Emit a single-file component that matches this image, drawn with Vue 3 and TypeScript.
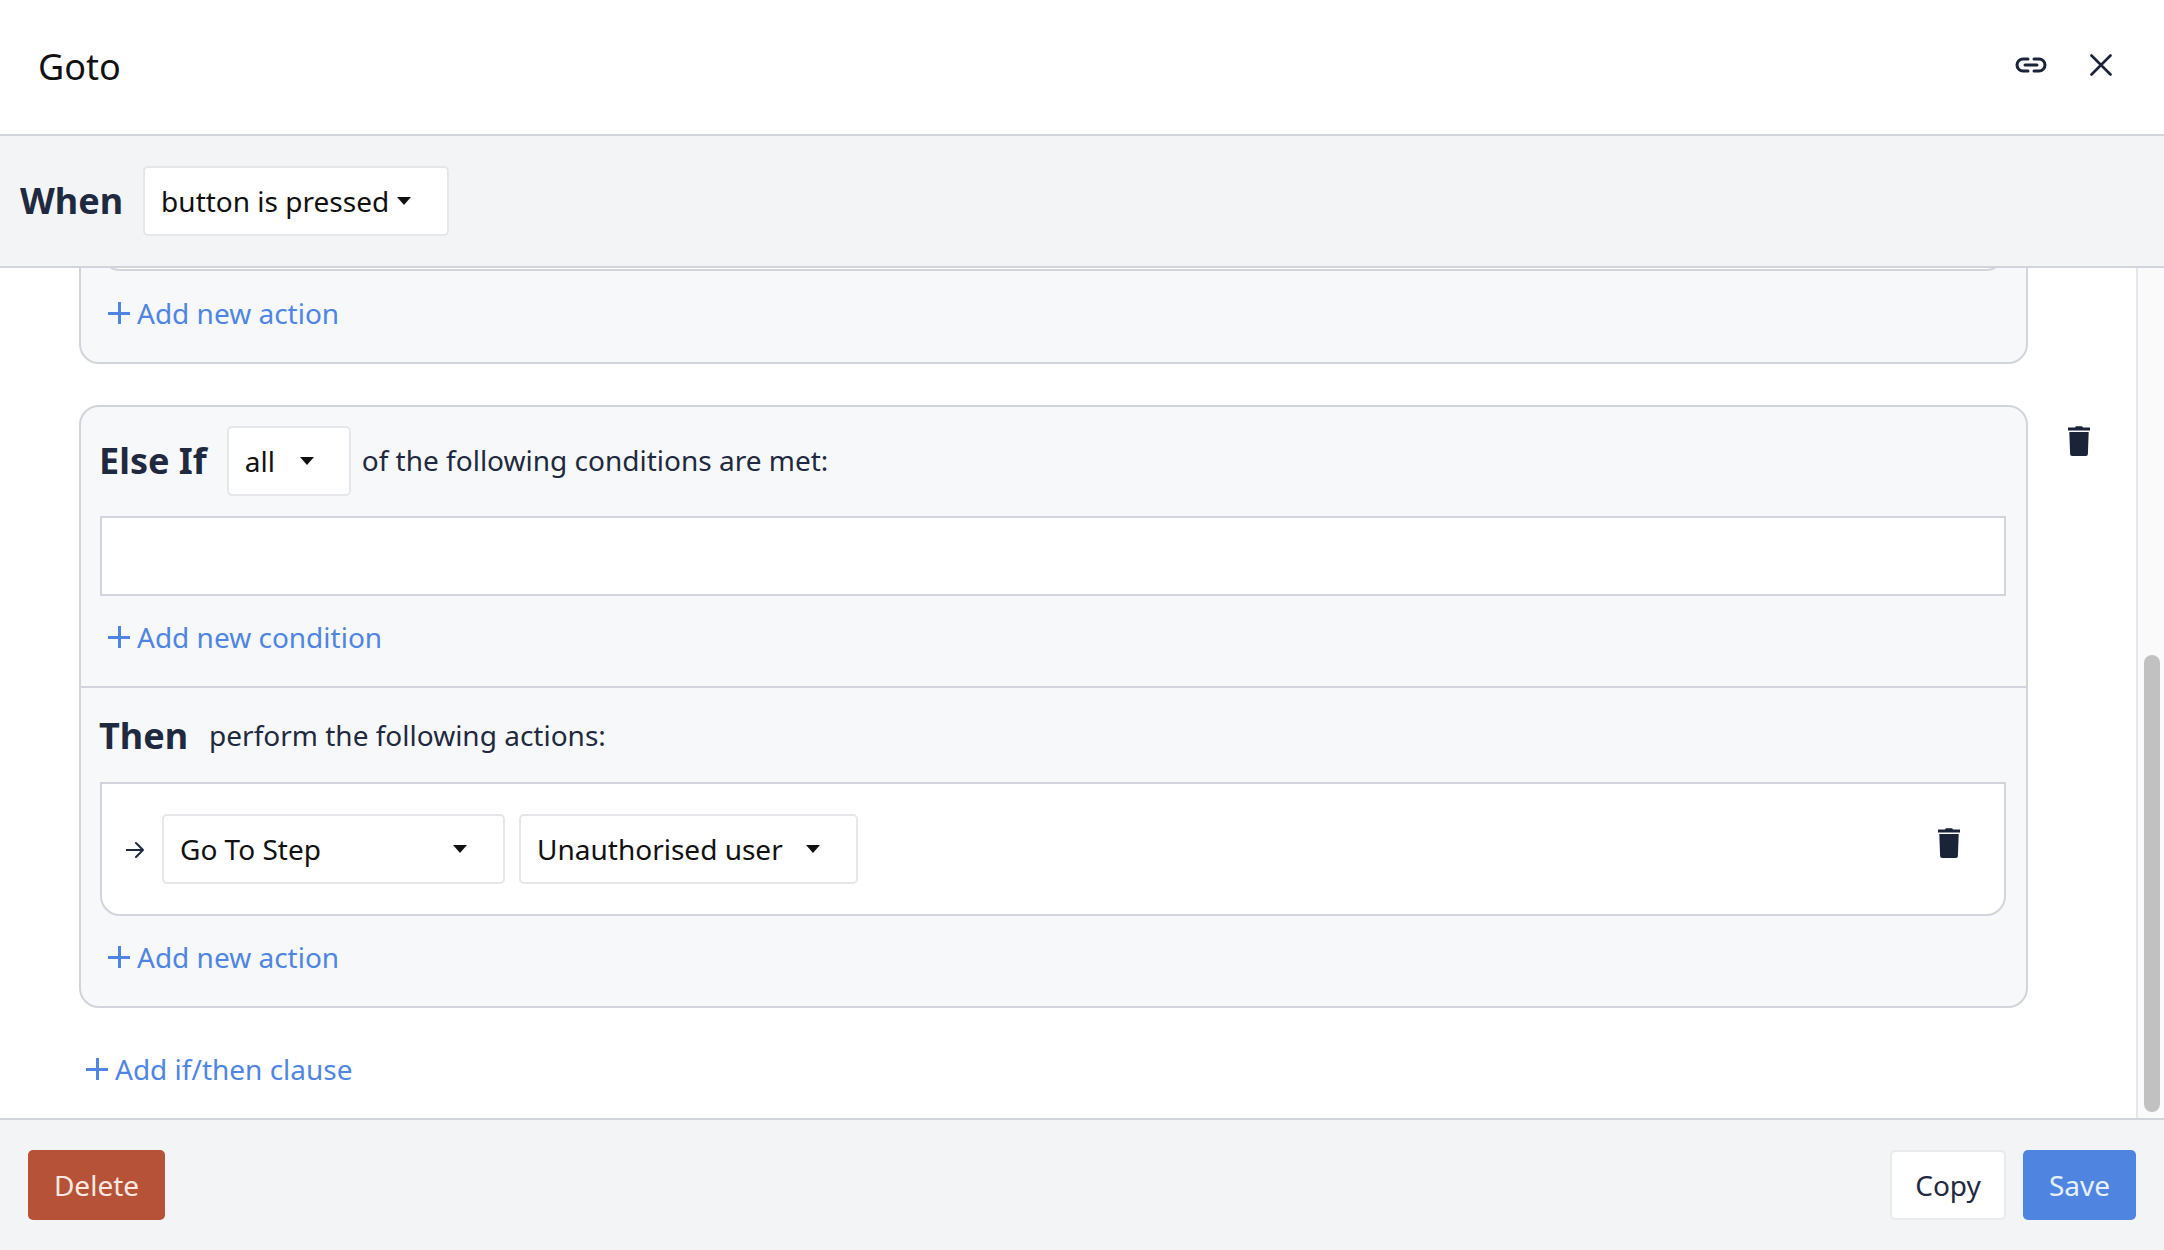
<template>
  <div class="modal">
    <header class="modal-header">
      <h1 class="title">Goto</h1>
      <div class="header-icons">
        <svg class="link-icon" viewBox="0 0 32 16" fill="none" stroke="currentColor" stroke-width="3" stroke-linecap="round">
          <path d="M13 2H8a6 6 0 0 0 0 12h5" />
          <path d="M19 2h5a6 6 0 0 1 0 12h-5" />
          <path d="M10 8h12" />
        </svg>
        <svg class="close-icon" viewBox="0 0 22 22" fill="none" stroke="currentColor" stroke-width="2.6" stroke-linecap="round">
          <path d="M1.500 1.500l19 19M20.500 1.500l-19 19" />
        </svg>
      </div>
    </header>

    <div class="toolbar">
      <span class="heading">When</span>
      <div class="dropdown when-dropdown">
        <span>button is pressed</span>
        <i class="caret"></i>
      </div>
    </div>

    <div class="body">
      <div class="scroller">
        <div class="clause-row first">
          <section class="card">
            <div class="part">
              <div class="action-box stub"></div>
              <a class="add-link"><span class="plus"></span>Add new action</a>
            </div>
          </section>
        </div>

        <div class="clause-row">
          <section class="card">
            <div class="part cond-part">
              <div class="row">
                <span class="heading">Else If</span>
                <div class="dropdown all-dropdown">
                  <span>all</span>
                  <i class="caret"></i>
                </div>
                <span class="note">of the following conditions are met:</span>
              </div>
              <div class="condition-box"></div>
              <a class="add-link"><span class="plus"></span>Add new condition</a>
            </div>
            <div class="part then-part">
              <div class="row then-row">
                <span class="heading">Then</span>
                <span class="note">perform the following actions:</span>
              </div>
              <div class="action-box">
                <svg class="arrow" viewBox="0 0 20 20" fill="none" stroke="currentColor" stroke-width="2" stroke-linecap="round" stroke-linejoin="round">
                  <path d="M0 10h17M10 3l7 7-7 7" />
                </svg>
                <div class="dropdown step-dropdown">
                  <span>Go To Step</span>
                  <i class="caret"></i>
                </div>
                <div class="dropdown target-dropdown">
                  <span>Unauthorised user</span>
                  <i class="caret"></i>
                </div>
                <svg class="trash action-trash" viewBox="0 0 22 30" fill="currentColor">
                  <path d="M7 1.500 8 .3h6l1 1.200h7v3H0v-3zM1.300 6h19.400l-.8 22a2 2 0 0 1-2 2H4.100a2 2 0 0 1-2-2z" />
                </svg>
              </div>
              <a class="add-link"><span class="plus"></span>Add new action</a>
            </div>
          </section>
          <svg class="trash card-trash" viewBox="0 0 22 30" fill="currentColor">
            <path d="M7 1.500 8 .3h6l1 1.200h7v3H0v-3zM1.300 6h19.400l-.8 22a2 2 0 0 1-2 2H4.100a2 2 0 0 1-2-2z" />
          </svg>
        </div>

        <a class="add-link add-clause"><span class="plus"></span>Add if/then clause</a>
      </div>
      <div class="scroll-track">
        <div class="scroll-thumb"></div>
      </div>
    </div>

    <footer class="modal-footer">
      <button class="btn btn-delete">Delete</button>
      <div class="footer-right">
        <button class="btn btn-copy">Copy</button>
        <button class="btn btn-save">Save</button>
      </div>
    </footer>
  </div>
</template>

<script setup lang="ts">
</script>

<style>
html,
body {
  margin: 0;
  background: #fff;
}
</style>

<style scoped>
.modal {
  width: 2164px;
  height: 1250px;
  display: flex;
  flex-direction: column;
  overflow: hidden;
  background: #fff;
  font-family: "Noto Sans", sans-serif;
  font-size: 28px;
  color: #1f2a40;
}

.modal-header {
  height: 134px;
  flex: none;
  display: flex;
  align-items: center;
  justify-content: space-between;
  padding: 0 52px 0 38px;
  border-bottom: 2px solid #d1d5db;
}

.title {
  margin: 0 0 2px;
  font-size: 36px;
  font-weight: 400;
  color: #111;
}

.header-icons {
  display: flex;
  align-items: center;
  gap: 43px;
  margin-bottom: 5px;
  color: #1a2338;
}

.link-icon {
  width: 32px;
  height: 16px;
}

.close-icon {
  width: 22px;
  height: 22px;
}

.toolbar {
  height: 130px;
  flex: none;
  display: flex;
  align-items: center;
  gap: 20px;
  padding-left: 20px;
  background: #f3f4f6;
  border-bottom: 2px solid #d1d5db;
}

.heading {
  font-size: 36px;
  font-weight: 700;
  line-height: 44px;
  color: #1f2a40;
}

.card .heading {
  margin-left: -1px;
}

.dropdown {
  height: 70px;
  box-sizing: border-box;
  flex: none;
  display: flex;
  align-items: center;
  padding: 0 36px 0 16px;
  background: #fff;
  border: 2px solid #e5e7eb;
  border-radius: 5px;
  color: #111;
  white-space: nowrap;
}

.caret {
  width: 0;
  height: 0;
  margin-left: auto;
  border-left: 7px solid transparent;
  border-right: 7px solid transparent;
  border-top: 8px solid #111;
}

.when-dropdown {
  width: 306px;
}

.all-dropdown {
  width: 124px;
  padding-right: 35px;
  margin-right: -9px;
}

.step-dropdown {
  width: 343px;
}

.target-dropdown {
  width: 339px;
  margin-left: 14px;
}

.body {
  flex: 1;
  min-height: 0;
  display: flex;
}

.scroller {
  flex: 1;
  min-width: 0;
  overflow: hidden;
  padding-left: 79px;
}

.clause-row {
  display: flex;
  align-items: flex-start;
  gap: 40px;
  margin-bottom: 40px;
}

.clause-row.first {
  margin-top: -27px;
  margin-bottom: 41px;
}

.card {
  width: 1949px;
  box-sizing: border-box;
  flex: none;
  background: #f7f8fa;
  border: 2px solid #d1d5db;
  border-radius: 20px;
}

.part {
  padding: 0 20px 27px 19px;
}

.cond-part {
  padding-top: 19px;
  border-bottom: 2px solid #d1d5db;
}

.then-part {
  padding-top: 26px;
}

.row {
  display: flex;
  align-items: center;
  gap: 20px;
}

.then-row {
  height: 44px;
  gap: 21px;
  margin-bottom: 24px;
}

.note {
  line-height: 44px;
  margin-bottom: 2px;
}

.condition-box {
  height: 80px;
  box-sizing: border-box;
  margin-top: 20px;
  background: #fff;
  border: 2px solid #d1d5db;
}

.action-box {
  height: 134px;
  box-sizing: border-box;
  display: flex;
  align-items: center;
  padding: 0 44px 0 24px;
  background: #fff;
  border: 2px solid #d1d5db;
  border-radius: 0 0 20px 20px;
}

.action-box.stub {
  height: 28px;
  margin-bottom: 20px;
  border-top: none;
}

.arrow {
  width: 20px;
  height: 20px;
  flex: none;
  margin: 2px 16px 0 0;
}

.trash {
  width: 22px;
  height: 30px;
  flex: none;
  color: #1a2338;
}

.action-trash {
  margin-left: auto;
  margin-bottom: 12px;
}

.card-trash {
  margin-top: 21px;
}

.add-link {
  display: flex;
  align-items: center;
  height: 44px;
  margin-top: 19px;
  margin-left: 8px;
  color: #4f85e3;
  line-height: 44px;
}

.stub + .add-link {
  margin-top: 0;
}

.plus {
  position: relative;
  width: 22px;
  height: 22px;
  margin-right: 7px;
}

.plus::before,
.plus::after {
  content: "";
  position: absolute;
  background: currentColor;
}

.plus::before {
  left: 0;
  right: 0;
  top: 10px;
  height: 3px;
}

.plus::after {
  top: 0;
  bottom: 0;
  left: 10px;
  width: 3px;
}

.add-clause {
  margin-top: -1px;
  margin-left: 7px;
}

.scroll-track {
  width: 28px;
  flex: none;
  box-sizing: border-box;
  padding: 387px 4px 6px 6px;
  background: #fafafa;
  border-left: 2px solid #e5e7eb;
}

.scroll-thumb {
  height: 100%;
  background: #c1c1c1;
  border-radius: 8px;
}

.modal-footer {
  height: 130px;
  flex: none;
  display: flex;
  align-items: center;
  justify-content: space-between;
  padding: 0 28px;
  background: #f3f4f6;
  border-top: 2px solid #d1d5db;
}

.footer-right {
  display: flex;
  gap: 17px;
}

.btn {
  height: 70px;
  box-sizing: border-box;
  padding: 0;
  font: inherit;
  border-radius: 5px;
  border: 2px solid transparent;
}

.btn-delete {
  width: 137px;
  background: #b55237;
  color: #fde9e2;
}

.btn-copy {
  width: 116px;
  background: #fff;
  border-color: #e9eaec;
  color: #1f2a40;
}

.btn-save {
  width: 113px;
  background: #4f85e1;
  color: #e6effc;
}
</style>
